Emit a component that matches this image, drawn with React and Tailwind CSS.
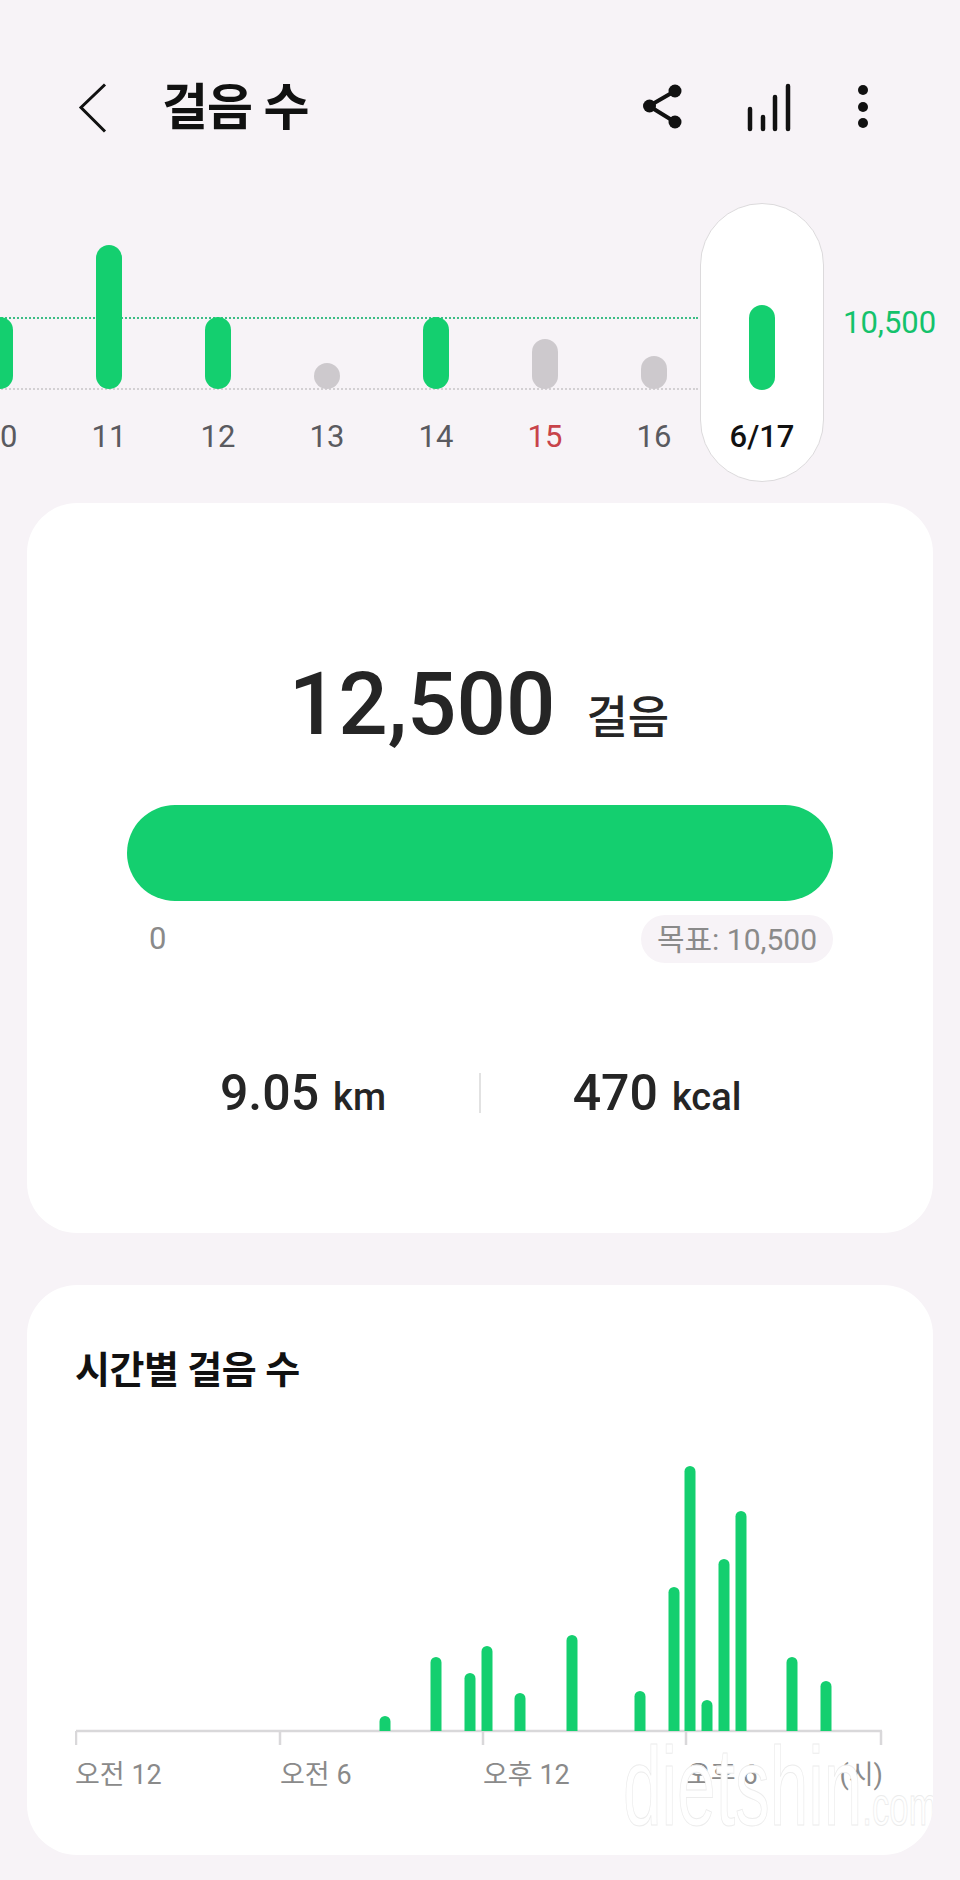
const FONT = "font-['Roboto','Noto_Sans_CJK_KR',sans-serif]";

const DAYS = [
  { label: '10', top: 72, green: true },
  { label: '11', top: 42, green: true },
  { label: '12', top: 114, green: true },
  { label: '13', top: 160, green: false },
  { label: '14', top: 114, green: true },
  { label: '15', top: 136, green: false, red: true },
  { label: '16', top: 153, green: false },
];
DAYS[0].top = 114;

// x center, top of bar, in chart coordinates (0,0 = left end of axis, top of tallest bar)
const HOURS = [
  [310, 250], [361, 191], [395, 207], [412, 180], [445, 227], [497, 169], [565, 225],
  [599, 121], [615, 0], [632, 234], [649, 93], [666, 45], [717, 191], [751, 215],
];
const AXIS_Y = 265;

function barPath(x, top) {
  const r = 5.5;
  return `M${x - r} ${AXIS_Y}V${top + r}A${r} ${r} 0 0 1 ${x + r} ${top + r}V${AXIS_Y}Z`;
}

function HourChart() {
  return (
    <svg width="810" height="280" viewBox="0 0 810 280" className="block">
      <g stroke="#d9d8da" strokeWidth="2.5" fill="none">
        <path d="M1 265H807" />
        <path d="M1 265V279M205 265V279M408 265V279M611 265V279M806 265V279" />
      </g>
      {HOURS.map(([x, top]) => (
        <path key={x} d={barPath(x, top)} fill="#14cf6f" />
      ))}
    </svg>
  );
}

export default function App() {
  return (
    <div className={`${FONT} relative w-[960px] h-[1880px] overflow-hidden bg-[#f7f3f7]`}>
      {/* Header */}
      <header className="flex items-start h-[203px] pt-[83px] pl-[78px]">
        <svg width="30" height="50" viewBox="0 0 30 50" className="shrink-0">
          <path d="M27 1.5 3 24.5l24 24" fill="none" stroke="#111" strokeWidth="3" />
        </svg>
        <h1 className="ml-[54px] mt-[-8px] text-[50px] leading-[66px] font-bold text-[#111] tracking-[-1px]">걸음 수</h1>
        <svg width="42" height="50" viewBox="0 0 42 50" className="ml-auto shrink-0">
          <path d="M32 8 6 23l26 16" fill="none" stroke="#111" strokeWidth="4" />
          <circle cx="32" cy="8" r="6.5" fill="#111" />
          <circle cx="6.5" cy="23" r="6.5" fill="#111" />
          <circle cx="32" cy="39" r="6.5" fill="#111" />
        </svg>
        <svg width="44" height="50" viewBox="0 0 44 50" className="ml-[62px] shrink-0">
          <g stroke="#111" strokeWidth="4.5" strokeLinecap="round">
            <path d="M3 26V46M16 34V46M28 14V46M41 3V46" />
          </g>
        </svg>
        <svg width="12" height="50" viewBox="0 0 12 50" className="ml-[66px] mr-[91px] shrink-0">
          <circle cx="6" cy="7" r="5" fill="#111" />
          <circle cx="6" cy="24" r="5" fill="#111" />
          <circle cx="6" cy="40" r="5" fill="#111" />
        </svg>
      </header>

      {/* Weekly strip */}
      <section className="relative flex h-[279px] ml-[-54.5px]">
        <div className="absolute left-0 top-[114px] w-[752px] border-t-2 border-dotted border-[#3dbd86]" />
        <div className="absolute left-0 top-[185px] w-[752px] border-t-2 border-dotted border-[#d3d0d3]" />
        {DAYS.map((d) => (
          <div key={d.label} className="relative flex flex-col items-center w-[109px] shrink-0">
            <div className="flex items-end h-[186px]">
              <div
                className={d.green ? 'w-[26px] rounded-full bg-[#14cf6f]' : 'w-[26px] rounded-full bg-[#cdc9cd]'}
                style={{ height: 186 - d.top }}
              />
            </div>
            <span className={d.red ? 'mt-[26px] text-[31px] leading-[44px] text-[#c8434a]' : 'mt-[26px] text-[31px] leading-[44px] text-[#5a5a60]'}>
              {d.label}
            </span>
          </div>
        ))}
        <div className="relative flex flex-col items-center shrink-0 w-[124px] h-[279px] ml-[-8.5px] rounded-full bg-white border border-[#dcdadc]">
          <div className="flex items-end h-[186px]">
            <div className="w-[26px] h-[85px] rounded-full bg-[#14cf6f]" />
          </div>
          <span className="mt-[25px] text-[31px] leading-[44px] font-medium text-[#111]">6/17</span>
        </div>
        <span className="ml-[19px] mt-[98px] h-[44px] text-[31px] leading-[44px] text-[#14c26c]">10,500</span>
      </section>

      {/* Summary card */}
      <section className="mt-[21px] mx-[27px] h-[730px] rounded-[50px] bg-white px-[100px] pt-[146px]">
        <div className="flex items-baseline justify-center h-[110px] pr-[2px]">
          <span className="text-[87px] leading-[110px] font-medium text-[#252525]">12,500</span>
          <span className="ml-[31px] text-[45px] leading-[110px] font-medium text-[#252525]">걸음</span>
        </div>
        <div className="mt-[46px] h-[96px] rounded-full bg-[#14cf6f]" />
        <div className="flex items-start justify-between mt-[14px]">
          <span className="ml-[22px] mt-[3px] text-[31px] leading-[42px] text-[#8a8a8a]">0</span>
          <span className="flex items-center h-[48px] px-[16px] rounded-full bg-[#f7f3f7] text-[30px] text-[#8a8a8a]">목표: 10,500</span>
        </div>
        <div className="flex items-center mt-[100px] h-[60px]">
          <div className="flex-1 flex items-baseline justify-center">
            <span className="text-[50px] font-medium text-[#252525]">9.05</span>
            <span className="ml-[14px] text-[38px] font-medium text-[#252525]">km</span>
          </div>
          <div className="w-[2px] h-[40px] bg-[#e2e2e2]" />
          <div className="flex-1 flex items-baseline justify-center">
            <span className="text-[50px] font-medium text-[#252525]">470</span>
            <span className="ml-[14px] text-[38px] font-medium text-[#252525]">kcal</span>
          </div>
        </div>
      </section>

      {/* Hourly card */}
      <section className="relative mt-[52px] mx-[27px] h-[570px] rounded-[50px] bg-white px-[48px] pt-[60px] overflow-hidden">
        <h2 className="text-[38px] leading-[50px] font-bold text-[#111] tracking-[-0.5px]">시간별 걸음 수</h2>
        <div className="mt-[71px]">
          <HourChart />
        </div>
        <div className="flex mt-[9px] w-[810px] text-[27px] leading-[40px] text-[#8a8a8a]">
          <span className="w-[205px]">오전 12</span>
          <span className="w-[203px]">오전 6</span>
          <span className="w-[203px]">오후 12</span>
          <span className="flex-1 flex justify-between pr-[2px]">
            <span>오후 6</span>
            <span>(시)</span>
          </span>
        </div>
        <span className="absolute left-[596px] top-[446px] origin-top-left scale-x-[0.62] text-[112px] leading-[112px] whitespace-nowrap text-[#ffffff] [-webkit-text-stroke:1px_#ececec] font-['Liberation_Sans',sans-serif]">
          dietshin<span className="text-[56px]">.com</span>
        </span>
      </section>
    </div>
  );
}
